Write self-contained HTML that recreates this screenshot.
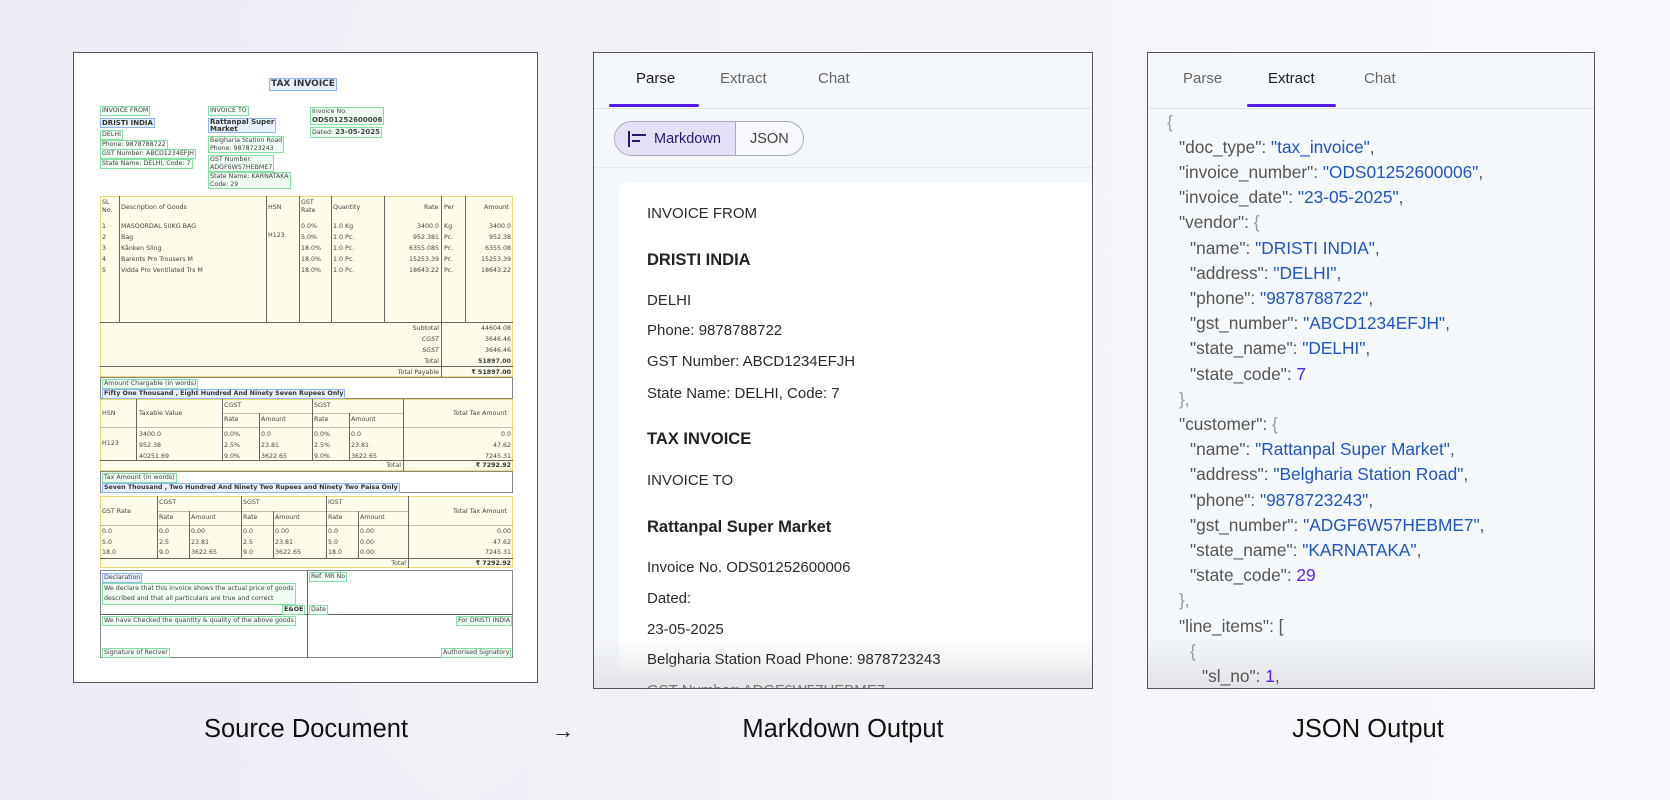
<!DOCTYPE html>
<html><head><meta charset="utf-8"><style>
*{margin:0;padding:0;box-sizing:border-box}
body{width:1670px;height:775px;overflow:hidden;position:relative;font-family:"Liberation Sans",sans-serif;
background:linear-gradient(90deg,#efebf6 0%,#f2eff7 35%,#f6f4f9 60%,#f9f8fc 100%)}
.blob{position:absolute;left:300px;top:-100px;width:320px;height:900px;border-radius:50%;background:#f4f1f8;opacity:.5}
.doc{position:absolute;left:73px;top:52px;width:465px;height:631px;background:#fff;border:1.3px solid #555}
.t{position:absolute;font-family:"DejaVu Sans",sans-serif;font-size:6.3px;color:#444;white-space:nowrap;line-height:1.2}
.b{font-weight:bold;color:#333}
.g{border:1px solid #86e0a6;background:#effbf3;padding:0 1px}
.bl{border:1px solid #8fb6f2;background:#e9f0fd;padding:0 1px}
.y{position:absolute;background:#fdfbea;border:1.5px solid #ecd97a}
.ln{position:absolute;background:#666}
.bx{position:absolute;border:1px solid #888}
.panel{position:absolute;top:52px;height:637px;border:1.3px solid #555;background:#f5f8fb;overflow:hidden}
.tab{position:absolute;top:70px;font-size:15px;color:#666}
.tab.a{color:#1d1d1f}
.ul{position:absolute;top:104px;height:3px;background:#5418f0;border-radius:2px}
.md{position:absolute;left:647px;font-size:15px;color:#2a2a2a;white-space:nowrap}
.h{font-weight:bold;font-size:16.5px;color:#222}
.j{position:absolute;font-size:17.3px;color:#555;white-space:nowrap}
.s{color:#1f55c0}.n{color:#5a1ff2}.p{color:#999}
.lab{position:absolute;top:715px;font-size:25.5px;color:#111;transform:translateX(-50%);white-space:nowrap}
.fade{position:absolute;left:0;right:0;bottom:0;height:50px;background:linear-gradient(180deg,rgba(235,237,240,0),rgba(222,224,228,.85))}
</style></head><body>
<div class="blob"></div>

<div class="doc"></div>
<div class="t b bl" style="left:269px;top:78px;font-size:9px">TAX INVOICE</div>
<div class="t g" style="left:100px;top:106px">INVOICE FROM</div>
<div class="t b bl" style="left:100px;top:118px;font-size:7px">DRISTI INDIA</div>
<div class="t g" style="left:100px;top:130px">DELHI</div>
<div class="t g" style="left:100px;top:140px">Phone: 9878788722</div>
<div class="t g" style="left:100px;top:149px">GST Number: ABCD1234EFJH</div>
<div class="t g" style="left:100px;top:159px">State Name: DELHI, Code: 7</div>
<div class="t g" style="left:208px;top:106px">INVOICE TO</div>
<div class="t b bl" style="left:208px;top:118px;font-size:7px;line-height:.95">Rattanpal Super<br>Market</div>
<div class="t g" style="left:208px;top:136px">Belgharia Station Road<br>Phone: 9878723243</div>
<div class="t g" style="left:208px;top:155px">GST Number:<br>ADGF6W57HEBME7</div>
<div class="t g" style="left:208px;top:172px">State Name: KARNATAKA<br>Code: 29</div>
<div class="t g" style="left:310px;top:107px">Invoice No.<br><b style="font-size:7px">ODS01252600006</b></div>
<div class="t g" style="left:310px;top:127px">Dated: <b style="font-size:7px">23-05-2025</b></div>

<div class="y" style="left:100px;top:196px;width:413px;height:181px"></div>
<div class="ln" style="left:119px;top:196px;width:1px;height:126px"></div>
<div class="ln" style="left:266px;top:196px;width:1px;height:126px"></div>
<div class="ln" style="left:299px;top:196px;width:1px;height:126px"></div>
<div class="ln" style="left:331px;top:196px;width:1px;height:126px"></div>
<div class="ln" style="left:384px;top:196px;width:1px;height:126px"></div>
<div class="ln" style="left:441px;top:196px;width:1px;height:181px"></div>
<div class="ln" style="left:465px;top:196px;width:1px;height:126px"></div>
<div class="ln" style="left:100px;top:322px;width:413px;height:1px"></div>
<div class="ln" style="left:100px;top:366px;width:413px;height:1px"></div>
<div class="t" style="left:102px;top:199px">SL<br>No.</div>
<div class="t" style="left:121px;top:204px">Description of Goods</div>
<div class="t" style="left:268px;top:204px">HSN</div>
<div class="t" style="left:301px;top:199px">GST<br>Rate</div>
<div class="t" style="left:333px;top:204px">Quantity</div>
<div class="t" style="left:424px;top:204px">Rate</div>
<div class="t" style="left:444px;top:204px">Per</div>
<div class="t" style="left:484px;top:204px">Amount</div>
<div class="t" style="left:102px;top:221px;line-height:11px">1<br>2<br>3<br>4<br>5</div>
<div class="t" style="left:121px;top:221px;line-height:11px">MASOORDAL 50KG BAG<br>Bag<br>Kånken Sling<br>Barents Pro Trousers M<br>Vidda Pro Ventilated Trs M</div>
<div class="t" style="left:268px;top:232px">H123</div>
<div class="t" style="left:301px;top:221px;line-height:11px">0.0%<br>5.0%<br>18.0%<br>18.0%<br>18.0%</div>
<div class="t" style="left:333px;top:221px;line-height:11px">1.0 Kg<br>1.0 Pc.<br>1.0 Pc.<br>1.0 Pc.<br>1.0 Pc.</div>
<div class="t" style="left:400px;top:221px;line-height:11px;text-align:right;width:39px">3400.0<br>952.381<br>6355.085<br>15253.39<br>18643.22</div>
<div class="t" style="left:444px;top:221px;line-height:11px">Kg<br>Pc.<br>Pc.<br>Pc.<br>Pc.</div>
<div class="t" style="left:466px;top:221px;line-height:11px;text-align:right;width:45px">3400.0<br>952.38<br>6355.08<br>15253.39<br>18643.22</div>
<div class="t" style="left:380px;top:323px;line-height:11px;text-align:right;width:59px">Subtotal<br><i>CGST</i><br><i>SGST</i><br>Total</div>
<div class="t" style="left:443px;top:323px;line-height:11px;text-align:right;width:68px">44604.08<br>3646.46<br>3646.46<br><b>51897.00</b></div>
<div class="t" style="left:360px;top:369px;text-align:right;width:79px">Total Payable</div>
<div class="t b" style="left:443px;top:369px;text-align:right;width:68px">₹ 51897.00</div>

<div class="bx" style="left:100px;top:377px;width:413px;height:22px"></div>
<div class="t g" style="left:102px;top:379px">Amount Chargable (in words)</div>
<div class="t b bl" style="left:102px;top:389px">Fifty One Thousand , Eight Hundred And Ninety Seven Rupees Only</div>

<div class="y" style="left:100px;top:399px;width:413px;height:72px"></div>
<div class="ln" style="left:136px;top:399px;width:1px;height:61px"></div>
<div class="ln" style="left:222px;top:399px;width:1px;height:61px"></div>
<div class="ln" style="left:259px;top:413px;width:1px;height:47px"></div>
<div class="ln" style="left:312px;top:399px;width:1px;height:61px"></div>
<div class="ln" style="left:349px;top:413px;width:1px;height:47px"></div>
<div class="ln" style="left:403px;top:399px;width:1px;height:72px"></div>
<div class="ln" style="left:222px;top:413px;width:181px;height:1px;opacity:.4"></div>
<div class="ln" style="left:100px;top:427px;width:413px;height:1px;opacity:.4"></div>
<div class="ln" style="left:100px;top:460px;width:413px;height:1px"></div>
<div class="t" style="left:102px;top:410px">HSN</div>
<div class="t" style="left:139px;top:410px">Taxable Value</div>
<div class="t" style="left:224px;top:402px">CGST</div>
<div class="t" style="left:314px;top:402px">SGST</div>
<div class="t" style="left:224px;top:416px">Rate</div>
<div class="t" style="left:261px;top:416px">Amount</div>
<div class="t" style="left:314px;top:416px">Rate</div>
<div class="t" style="left:351px;top:416px">Amount</div>
<div class="t" style="left:453px;top:410px">Total Tax Amount</div>
<div class="t" style="left:102px;top:440px">H123</div>
<div class="t" style="left:139px;top:429px;line-height:11px">3400.0<br>952.38<br>40251.69</div>
<div class="t" style="left:224px;top:429px;line-height:11px">0.0%<br>2.5%<br>9.0%</div>
<div class="t" style="left:261px;top:429px;line-height:11px">0.0<br>23.81<br>3622.65</div>
<div class="t" style="left:314px;top:429px;line-height:11px">0.0%<br>2.5%<br>9.0%</div>
<div class="t" style="left:351px;top:429px;line-height:11px">0.0<br>23.81<br>3622.65</div>
<div class="t" style="left:440px;top:429px;line-height:11px;text-align:right;width:71px">0.0<br>47.62<br>7245.31</div>
<div class="t" style="left:370px;top:462px;text-align:right;width:31px">Total</div>
<div class="t b" style="left:440px;top:462px;text-align:right;width:71px">₹ 7292.92</div>

<div class="bx" style="left:100px;top:471px;width:413px;height:22px"></div>
<div class="t g" style="left:102px;top:473px">Tax Amount (in words)</div>
<div class="t b bl" style="left:102px;top:483px">Seven Thousand , Two Hundred And Ninety Two Rupees and Ninety Two Paisa Only</div>

<div class="y" style="left:100px;top:496px;width:413px;height:72px"></div>
<div class="ln" style="left:157px;top:496px;width:1px;height:62px"></div>
<div class="ln" style="left:189px;top:511px;width:1px;height:47px"></div>
<div class="ln" style="left:241px;top:496px;width:1px;height:62px"></div>
<div class="ln" style="left:273px;top:511px;width:1px;height:47px"></div>
<div class="ln" style="left:326px;top:496px;width:1px;height:62px"></div>
<div class="ln" style="left:358px;top:511px;width:1px;height:47px"></div>
<div class="ln" style="left:408px;top:496px;width:1px;height:72px"></div>
<div class="ln" style="left:157px;top:511px;width:251px;height:1px;opacity:.4"></div>
<div class="ln" style="left:100px;top:525px;width:413px;height:1px;opacity:.4"></div>
<div class="ln" style="left:100px;top:558px;width:413px;height:1px"></div>
<div class="t" style="left:102px;top:508px">GST Rate</div>
<div class="t" style="left:159px;top:499px">CGST</div>
<div class="t" style="left:243px;top:499px">SGST</div>
<div class="t" style="left:328px;top:499px">IGST</div>
<div class="t" style="left:159px;top:514px">Rate</div><div class="t" style="left:191px;top:514px">Amount</div>
<div class="t" style="left:243px;top:514px">Rate</div><div class="t" style="left:275px;top:514px">Amount</div>
<div class="t" style="left:328px;top:514px">Rate</div><div class="t" style="left:360px;top:514px">Amount</div>
<div class="t" style="left:453px;top:508px">Total Tax Amount</div>
<div class="t" style="left:102px;top:527px;line-height:10.5px">0.0<br>5.0<br>18.0</div>
<div class="t" style="left:159px;top:527px;line-height:10.5px">0.0<br>2.5<br>9.0</div>
<div class="t" style="left:191px;top:527px;line-height:10.5px">0.00<br>23.81<br>3622.65</div>
<div class="t" style="left:243px;top:527px;line-height:10.5px">0.0<br>2.5<br>9.0</div>
<div class="t" style="left:275px;top:527px;line-height:10.5px">0.00<br>23.81<br>3622.65</div>
<div class="t" style="left:328px;top:527px;line-height:10.5px">0.0<br>5.0<br>18.0</div>
<div class="t" style="left:360px;top:527px;line-height:10.5px">0.00<br>0.00<br>0.00</div>
<div class="t" style="left:440px;top:527px;line-height:10.5px;text-align:right;width:71px">0.00<br>47.62<br>7245.31</div>
<div class="t" style="left:370px;top:560px;text-align:right;width:36px">Total</div>
<div class="t b" style="left:440px;top:560px;text-align:right;width:71px">₹ 7292.92</div>

<div class="bx" style="left:100px;top:570px;width:413px;height:88px"></div>
<div class="ln" style="left:307px;top:570px;width:1px;height:88px"></div>
<div class="ln" style="left:100px;top:614px;width:413px;height:1px"></div>
<div class="t bl" style="left:102px;top:573px">Declaration</div>
<div class="t g" style="left:102px;top:583px;line-height:10px">We declare that this invoice shows the actual price of goods<br>described and that all particulars are true and correct</div>
<div class="t b g" style="left:282px;top:605px">E&amp;OE</div>
<div class="t g" style="left:309px;top:572px">Ref. MR No</div>
<div class="t g" style="left:309px;top:605px">Date</div>
<div class="t g" style="left:102px;top:616px">We have Checked the quantity &amp; quality of the above goods</div>
<div class="t g" style="left:102px;top:648px">Signature of Reciver</div>
<div class="t g" style="left:456px;top:616px">For DRISTI INDIA</div>
<div class="t g" style="left:441px;top:648px">Authorised Signatory</div>

<div class="panel" style="left:593px;width:500px">
  <div style="position:absolute;left:0;right:0;top:55px;height:1px;background:#dfe3e8"></div>
  <div style="position:absolute;left:0;right:0;top:114px;height:1px;background:#e6e9ee"></div>
  <div style="position:absolute;left:20px;top:68px;width:190px;height:35px;border:1px solid #a8acb8;border-radius:18px;overflow:hidden;background:#f7f8fb">
    <div style="position:absolute;left:0;top:0;width:121px;height:100%;background:#e3e0f8;border-right:1px solid #a8acb8"></div>
    <div style="position:absolute;left:13px;top:9px;width:2px;height:16px;background:#2a1570"></div>
    <div style="position:absolute;left:17px;top:12px;width:14px;height:2px;background:#2a1570"></div>
    <div style="position:absolute;left:17px;top:18px;width:8px;height:2px;background:#2a1570"></div>
    <div style="position:absolute;left:39px;top:9px;font-size:14.5px;color:#2a1a6e">Markdown</div>
    <div style="position:absolute;left:135px;top:9px;font-size:14.5px;color:#444">JSON</div>
  </div>
  <div style="position:absolute;left:25px;top:130px;width:480px;height:520px;background:#fff;border-radius:8px"></div>
  <div class="fade"></div>
</div>
<div class="tab a" style="left:636px">Parse</div>
<div class="tab" style="left:720px">Extract</div>
<div class="tab" style="left:818px">Chat</div>
<div class="ul" style="left:609px;width:90px"></div>
<div class="md" style="top:205px">INVOICE FROM</div>
<div class="md h" style="top:251px">DRISTI INDIA</div>
<div class="md" style="top:292px">DELHI</div>
<div class="md" style="top:322px">Phone: 9878788722</div>
<div class="md" style="top:353px">GST Number: ABCD1234EFJH</div>
<div class="md" style="top:385px">State Name: DELHI, Code: 7</div>
<div class="md h" style="top:430px">TAX INVOICE</div>
<div class="md" style="top:472px">INVOICE TO</div>
<div class="md h" style="top:518px">Rattanpal Super Market</div>
<div class="md" style="top:559px">Invoice No. ODS01252600006</div>
<div class="md" style="top:590px">Dated:</div>
<div class="md" style="top:621px">23-05-2025</div>
<div class="md" style="top:651px">Belgharia Station Road Phone: 9878723243</div>
<div style="position:absolute;left:594px;top:665px;width:498px;height:23px;background:linear-gradient(180deg,rgba(240,241,243,.3),rgba(226,228,231,.9))"></div>
<div class="md" style="top:682px;height:6px;overflow:hidden;color:#777">GST Number: ADGF6W57HEBME7</div>

<div class="panel" style="left:1147px;width:448px">
  <div style="position:absolute;left:0;right:0;top:55px;height:1px;background:#dfe3e8"></div>
  <div class="fade" style="height:55px"></div>
</div>
<div class="tab" style="left:1183px">Parse</div>
<div class="tab a" style="left:1268px">Extract</div>
<div class="tab" style="left:1364px">Chat</div>
<div class="ul" style="left:1247px;width:89px"></div>
<div class="j p" style="left:1167px;top:112px">{</div>
<div class="j" style="left:1179px;top:137px">"doc_type": <span class="s">"tax_invoice"</span>,</div>
<div class="j" style="left:1179px;top:162px">"invoice_number": <span class="s">"ODS01252600006"</span>,</div>
<div class="j" style="left:1179px;top:187px">"invoice_date": <span class="s">"23-05-2025"</span>,</div>
<div class="j" style="left:1179px;top:212px">"vendor": <span class="p">{</span></div>
<div class="j" style="left:1190px;top:238px">"name": <span class="s">"DRISTI INDIA"</span>,</div>
<div class="j" style="left:1190px;top:263px">"address": <span class="s">"DELHI"</span>,</div>
<div class="j" style="left:1190px;top:288px">"phone": <span class="s">"9878788722"</span>,</div>
<div class="j" style="left:1190px;top:313px">"gst_number": <span class="s">"ABCD1234EFJH"</span>,</div>
<div class="j" style="left:1190px;top:338px">"state_name": <span class="s">"DELHI"</span>,</div>
<div class="j" style="left:1190px;top:364px">"state_code": <span class="n">7</span></div>
<div class="j p" style="left:1179px;top:389px">},</div>
<div class="j" style="left:1179px;top:414px">"customer": <span class="p">{</span></div>
<div class="j" style="left:1190px;top:439px">"name": <span class="s">"Rattanpal Super Market"</span>,</div>
<div class="j" style="left:1190px;top:464px">"address": <span class="s">"Belgharia Station Road"</span>,</div>
<div class="j" style="left:1190px;top:490px">"phone": <span class="s">"9878723243"</span>,</div>
<div class="j" style="left:1190px;top:515px">"gst_number": <span class="s">"ADGF6W57HEBME7"</span>,</div>
<div class="j" style="left:1190px;top:540px">"state_name": <span class="s">"KARNATAKA"</span>,</div>
<div class="j" style="left:1190px;top:565px">"state_code": <span class="n">29</span></div>
<div class="j p" style="left:1179px;top:590px">},</div>
<div class="j" style="left:1179px;top:616px">"line_items": [</div>
<div class="j p" style="left:1190px;top:641px">{</div>
<div class="j" style="left:1202px;top:666px">"sl_no": <span class="n">1</span>,</div>

<div class="lab" style="left:306px">Source Document</div>
<div class="lab" style="left:563px;top:718px;font-size:22px">→</div>
<div class="lab" style="left:843px">Markdown Output</div>
<div class="lab" style="left:1368px">JSON Output</div>
</body></html>
